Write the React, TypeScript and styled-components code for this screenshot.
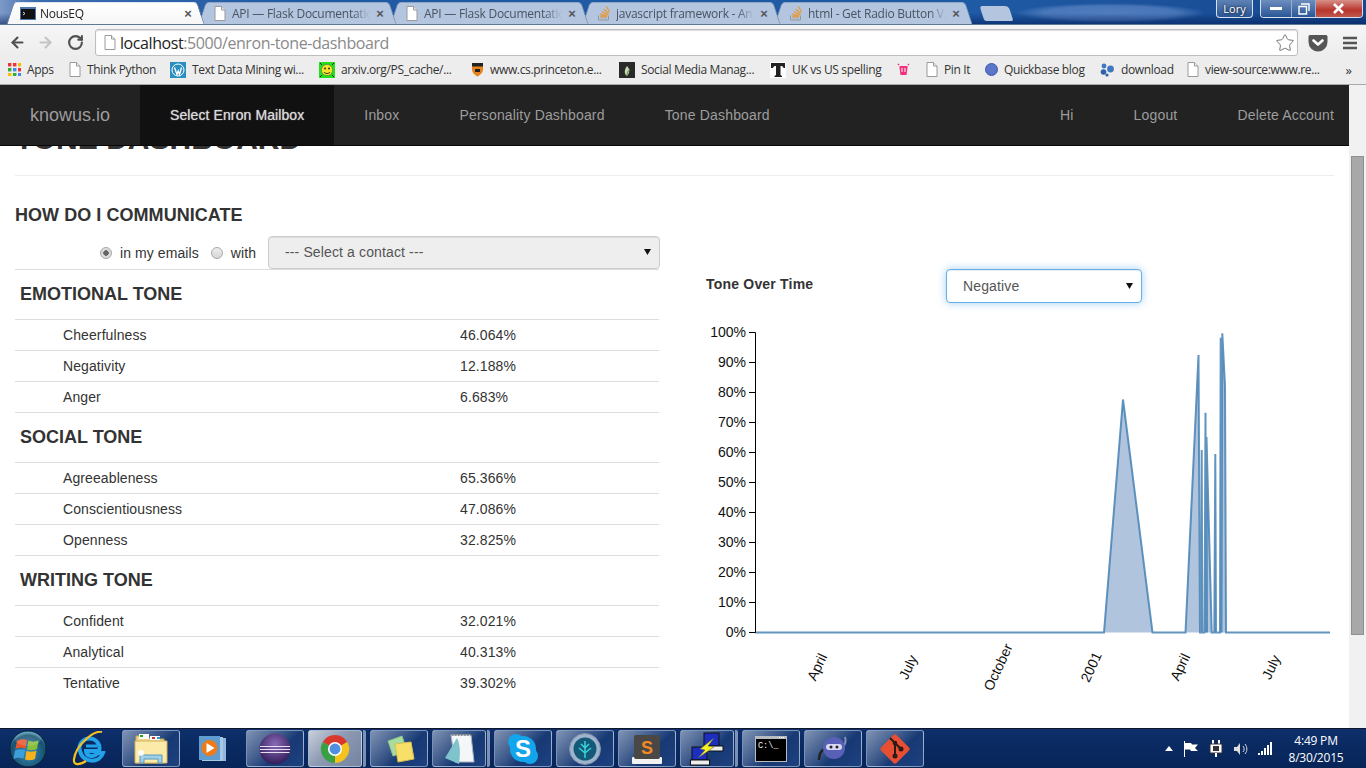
import React from "react";
import styled, { createGlobalStyle } from "styled-components";
import { ArrowLeft, ArrowRight, RotateCw, Star } from "lucide-react";

const Global = createGlobalStyle`
  html, body { margin: 0; padding: 0; height: 100%; overflow: hidden; background: #fff; }
  * { box-sizing: border-box; }
`;

const UI = `"Open Sans", "Noto Sans", "Liberation Sans", sans-serif`;
const WEB = `"Liberation Sans", Arial, sans-serif`;

const Desktop = styled.div`
  width: 1366px; height: 768px; display: flex; flex-direction: column; overflow: hidden;
  font-family: ${WEB}; color: #333;
`;

/* ---------- window title bar with tabs ---------- */
const TitleBar = styled.div`
  height: 25px; flex: none; display: flex; align-items: flex-start; padding-left: 6px;
  border-bottom: 1px solid #5f7898;
  background:
    linear-gradient(rgba(0,20,80,0) 55%, rgba(0,25,85,.55) 100%),
    radial-gradient(ellipse 95px 10px at 1110px 13px, rgba(90,132,196,.85) 0, rgba(90,132,196,.7) 70%, rgba(90,132,196,0) 100%),
    linear-gradient(90deg, #7d9ac6 0, #3c6cb0 35px, #1f5aa4 300px, #1f5aa4 980px, #17488f 1366px);
`;
const Tab = styled.div<{ $active?: boolean; $z: number }>`
  position: relative; width: 199px; height: 22px; margin-top: 2px; margin-right: -7px;
  z-index: ${p => p.$z}; display: flex; align-items: center; padding: 0 11px 0 14px;
  font: 12px ${UI}; color: ${p => (p.$active ? "#222" : "#4a5361")};
  &::before, &::after {
    content: ""; position: absolute; top: 0; bottom: 0; width: 52%; z-index: -1;
    background: ${p => (p.$active ? "linear-gradient(#ffffff, #f6f6f6)" : "#b3c5df")};
    border-top: 1px solid ${p => (p.$active ? "#dfe6f0" : "#8ea6c8")};
  }
  &::before { left: 4px; transform: skewX(-18deg); border-left: 1px solid #7089ab; border-top-left-radius: 4px; }
  &::after { right: 4px; transform: skewX(18deg); border-right: 1px solid #7089ab; border-top-right-radius: 4px; }
`;
const TabIcon = styled.span`width: 16px; flex: none; display: flex; justify-content: center;`;
const TabTitle = styled.span`
  flex: 1; min-width: 0; margin-left: 4px; white-space: nowrap; overflow: hidden; letter-spacing: -0.25px;
  -webkit-mask-image: linear-gradient(90deg, #000 88%, transparent 100%);
  mask-image: linear-gradient(90deg, #000 88%, transparent 100%);
`;
const TabClose = styled.span`
  flex: none; width: 12px; margin-left: 4px; font: bold 13px ${WEB}; color: #555; text-align: center;
`;
const NewTab = styled.div`
  width: 29px; height: 15px; margin: 6px 0 0 16px; background: #b3c5df; border-radius: 3px 4px 2px 2px;
  transform: skewX(18deg); flex: none;
`;
const WindowArea = styled.div`
  margin-left: auto; display: flex; gap: 7px; padding-right: 3px; align-items: flex-start;
`;
const UserBadge = styled.div`
  width: 37px; height: 18px; border: 1px solid #d6e0ee; border-top: 0; border-radius: 0 0 4px 4px;
  background: linear-gradient(#5f82b4, #2a5696); color: #fff; font: 11px ${UI};
  display: flex; align-items: center; justify-content: center;
  text-shadow: 0 0 3px #000;
`;
const Controls = styled.div`
  width: 103px; height: 18px; display: flex; border: 1px solid #d6e0ee; border-top: 0; border-radius: 0 0 4px 4px;
  overflow: hidden;
`;
const Ctrl = styled.div<{ $w: number; $close?: boolean }>`
  width: ${p => p.$w}px; display: flex; align-items: center; justify-content: center;
  color: #fff; background: ${p => (p.$close ? "linear-gradient(#d89088, #b8352c 60%, #c0584e)" : "linear-gradient(#6d8ebe, #2a5696)")};
  border-right: 1px solid #9ab0d0;
  &:last-child { border-right: 0; }
`;

/* ---------- browser toolbar ---------- */
const Toolbar = styled.div`
  height: 31px; flex: none; display: flex; align-items: center; padding: 4px 0 0 8px;
  background: linear-gradient(#f6f6f6, #ededed);
`;
const NavBtn = styled.div<{ $w: number }>`
  width: ${p => p.$w}px; flex: none; display: flex; align-items: center; justify-content: center;
`;
const Omnibox = styled.div`
  width: 1203px; height: 27px; flex: none; background: #fff; border: 1px solid #bdbdbd; border-radius: 3px;
  display: flex; align-items: center; padding: 0 2px 0 8px; font: 16px ${UI}; color: #8a8a8a;
  box-shadow: inset 0 1px 1px #ddd;
`;
const UrlHost = styled.span`color: #222;`;
const Url = styled.span`margin-left: 4px; white-space: nowrap; letter-spacing: -0.42px;`;
const OmniStar = styled.div`margin-left: auto; display: flex;`;

/* ---------- bookmarks ---------- */
const Bookmarks = styled.div`
  height: 29px; flex: none; display: flex; align-items: center; padding: 0 0 1px 8px;
  background: #ededed; border-bottom: 1px solid #a9a9a9; font: 12px ${UI}; color: #333;
  position: relative;
`;
const Bookmark = styled.div<{ $w: number }>`
  width: ${p => p.$w}px; flex: none; display: flex; align-items: center; gap: 6px; white-space: nowrap;
  letter-spacing: -0.35px;
  svg { flex: none; }
`;
const More = styled.div`margin-left: auto; padding-right: 14px; font-size: 13px;`;

/* ---------- page viewport ---------- */
const Viewport = styled.div`flex: 1; min-height: 0; display: flex;`;
const Page = styled.div`flex: 1; min-width: 0; display: flex; flex-direction: column;`;
const Navbar = styled.nav`
  height: 61px; flex: none; display: flex; background: #222; border-bottom: 1px solid #080808;
  color: #9d9d9d; font-size: 14px; position: relative; z-index: 2;
`;
const Brand = styled.div`padding: 0 30px; display: flex; align-items: center; font-size: 18px;`;
const NavItem = styled.div<{ $active?: boolean }>`
  padding: 0 30px; display: flex; align-items: center; white-space: nowrap; letter-spacing: .17px;
  ${p => p.$active && `background: #111; color: #d8d8d8; text-shadow: 0 0 1px #bbb; letter-spacing: .1px;`}
`;
const NavRight = styled.div`margin-left: auto; display: flex; margin-right: -15px;`;
const Scroller = styled.div`flex: 1; min-height: 0; overflow: hidden; background: #fff;`;
const Content = styled.div`margin-top: -24px;`;
const Header = styled.div`margin: 0 15px;`;
const PageTitle = styled.h1`
  margin: 0; font-size: 30px; line-height: 33px; font-weight: 700; white-space: nowrap;
`;
const Rule = styled.hr`margin: 20px 0 0; border: 0; border-top: 1px solid #eee;`;
const Columns = styled.div`display: grid; grid-template-columns: 1fr 1fr; margin-top: 29px;`;
const LeftCol = styled.div`padding: 0 15.5px 0 15px;`;
const RightCol = styled.div`padding: 64px 0 0 15px;`;
const Heading = styled.h4`
  margin: 0 0 11px; font-size: 18px; line-height: 20px; font-weight: 700; text-transform: uppercase;
  letter-spacing: .05px;
`;
const FilterRow = styled.div`
  display: flex; align-items: center; justify-content: flex-end; margin-right: -1px; height: 33px;
  font-size: 14px;
`;
const Radio = styled.span<{ $on?: boolean }>`
  width: 12px; height: 12px; border-radius: 50%; flex: none; border: 1px solid #a8a8a8;
  background: ${p => (p.$on ? "radial-gradient(circle, #666 0 2.5px, #dcdcdc 3px)" : "linear-gradient(#eee, #d6d6d6)")};
`;
const RadioLabel = styled.span`margin: 1px 12px 0 8px; white-space: nowrap; letter-spacing: .08px;`;
const Dropdown = styled.div<{ $focus?: boolean; $w: number }>`
  width: ${p => p.$w}px; height: ${p => (p.$focus ? 34 : 33)}px; flex: none; border-radius: 4px; font-size: 14px; color: #555;
  display: flex; align-items: center; justify-content: space-between; padding: 0 8px ${p => (p.$focus ? 0 : 2)}px 16px;
  letter-spacing: .13px;
  background: ${p => (p.$focus ? "#fff" : "#eee")};
  border: 1px solid ${p => (p.$focus ? "#66afe9" : "#ccc")};
  box-shadow: ${p => (p.$focus ? "inset 0 1px 1px rgba(0,0,0,.075), 0 0 8px rgba(102,175,233,.6)" : "inset 0 1px 1px rgba(0,0,0,.075)")};
`;
const Caret = styled.svg`flex: none; margin-top: -1px;`;
const Section = styled.section`border-top: 1px solid #ddd;`;
const SectionTitle = styled.h4`
  margin: 0; height: 49px; padding-left: 5px; display: flex; align-items: center;
  font-size: 18px; font-weight: 700; text-transform: uppercase;
`;
const Row = styled.div`
  height: 31px; border-top: 1px solid #ddd; display: grid; grid-template-columns: 397px 1fr;
  align-items: center; font-size: 14px; padding-left: 48px; letter-spacing: .1px;
`;
const ToneRow = styled.div`display: flex; align-items: flex-start; padding-left: 16.5px;`;
const ToneTitle = styled.div`
  width: 240px; flex: none; margin-top: 7px; font-size: 14px; font-weight: 700; letter-spacing: .2px;
`;
const Chart = styled.svg`display: block; margin-top: 17px;`;

const Scrollbar = styled.div`
  width: 17px; flex: none; background: #f1f1f1; display: flex; flex-direction: column; align-items: center;
`;
const ScrollSpacer = styled.div<{ $h: number }>`height: ${p => p.$h}px; flex: none;`;
const Thumb = styled.div`width: 13px; height: 479px; flex: none; background: #a8a8a8; border: 1px solid #8f8f8f;`;

/* ---------- windows task bar ---------- */
const Taskbar = styled.div`
  height: 40px; flex: none; display: flex; align-items: stretch; gap: 4px; padding: 1px 20px 1px 0;
  background: linear-gradient(#0f2f6c, #0a2a62 40%, #082558);
  border-top: 1px solid #10172c;
`;
const Pin = styled.div<{ $frame?: boolean; $active?: boolean; $w?: number }>`
  width: ${p => p.$w ?? 58}px; flex: none; display: flex; align-items: center; justify-content: center;
  border-radius: 3px;
  ${p => p.$frame && `
    border: 1px solid rgba(200,215,235,.55);
    background: ${p.$active
      ? "linear-gradient(135deg, #c9d0dc, #8d9ab2 45%, #7583a0)"
      : "linear-gradient(135deg, #7f93b4, #3f5b8c 40%, #173a74 60%, #1d4080)"};
  `}
`;
const PinStack = styled.div`
  width: 3px; margin-left: -3px; flex: none; border-radius: 0 2px 2px 0;
  background: rgba(200,215,235,.6);
`;
const Tray = styled.div`margin-left: auto; display: flex; align-items: center; color: #fff;`;
const TrayItem = styled.div<{ $w?: number }>`
  width: ${p => p.$w ?? 25}px; display: flex; justify-content: center; align-items: center;
`;
const Clock = styled.div`
  width: 60px; margin-left: 8px; text-align: center; font: 12px/17px ${UI}; color: #fff; letter-spacing: -0.2px;
`;

/* ---------- drawings ---------- */
const PageIcon = () => (
  <svg width="12" height="15" viewBox="0 0 12 15">
    <path d="M1 .5h6.5L11 4v10.5H1z" fill="#fff" stroke="#9a9a9a" />
    <path d="M7.5.5V4H11" fill="#eee" stroke="#9a9a9a" />
  </svg>
);
const TermFav = () => (
  <svg width="16" height="13" viewBox="0 0 16 13">
    <rect width="16" height="13" fill="#4a78b0" />
    <rect x="1" y="2" width="14" height="10" fill="#111" />
    <path d="M3 5l2 1.5L3 8" stroke="#ddd" fill="none" />
  </svg>
);
const SOIcon = () => (
  <svg width="14" height="16" viewBox="0 0 14 16">
    <path d="M1.5 10.5v4.5h10v-4.5" fill="none" stroke="#999" />
    <path d="M3 13h7" stroke="#aaa" />
    <path d="M3 11l7 .8M3.5 9l6.8 1.8M5 6.5l6 3.2M7 4.2l4.8 4.6M9.5 1.5l3 5.5" stroke="#e59a3c" strokeWidth="1.3" />
  </svg>
);
const AppsIcon = () => {
  const c = ["#e33", "#e33", "#fb0", "#3a3", "#48e", "#e33", "#fb0", "#3a3", "#48e"];
  return (
    <svg width="13" height="13" viewBox="0 0 13 13">
      {c.map((f, i) => <rect key={i} x={(i % 3) * 5} y={Math.floor(i / 3) * 5} width="3.4" height="3.4" fill={f} />)}
    </svg>
  );
};
const WpIcon = () => (
  <svg width="16" height="16" viewBox="0 0 16 16">
    <rect width="16" height="16" fill="#2a8fc0" />
    <circle cx="8" cy="8" r="6" fill="none" stroke="#fff" />
    <path d="M4.5 5.5l2.5 7 1.2-3.5 1.3 3.5 2-7" fill="none" stroke="#fff" strokeWidth="1.4" />
  </svg>
);
const SmileyIcon = () => (
  <svg width="16" height="16" viewBox="0 0 16 16">
    <rect width="16" height="16" fill="#22e01a" />
    <circle cx="8" cy="8" r="5.6" fill="#f5e62a" stroke="#665" strokeWidth=".6" />
    <circle cx="6" cy="6.5" r=".9" fill="#222" /><circle cx="10" cy="6.5" r=".9" fill="#222" />
    <path d="M5 10c1.5 2 4.5 2 6 0" fill="none" stroke="#222" />
    <path d="M1 1l2 2M15 1l-2 2M1 15l2-2M15 15l-2-2" stroke="#222" />
  </svg>
);
const ShieldIcon = () => (
  <svg width="13" height="15" viewBox="0 0 13 15">
    <path d="M1 1h11v6c0 4-3 6-5.500 7.500C4 13 1 11 1 7z" fill="#e8821e" />
    <path d="M1 1h11v3.500H1z" fill="#222" />
    <path d="M4 7h5v3H4z" fill="#222" />
  </svg>
);
const LeafIcon = () => (
  <svg width="16" height="16" viewBox="0 0 16 16">
    <rect width="16" height="16" fill="#2a2a28" />
    <path d="M8 14c-3-2-3-6 0-10 3 3 3 7 0 10z" fill="#c9d8b8" />
    <path d="M8 14c0-3 1-5 3-7" stroke="#5c8a3c" fill="none" />
  </svg>
);
const TIcon = () => (
  <svg width="16" height="16" viewBox="0 0 16 16">
    <rect width="16" height="16" fill="#fff" />
    <path d="M1 1h14v5h-1.500c-.5-1.500-1-2-3-2v9l1.500 1v1H4.500v-1L6 13V4c-2 0-2.500.5-3 2H1z" fill="#222" />
  </svg>
);
const PinkIcon = () => (
  <svg width="15" height="13" viewBox="0 0 15 13">
    <path d="M2 1l1 1M13 1l-1 1" stroke="#e6307a" strokeWidth="1.5" />
    <path d="M3.500 3h8v2l-1 7h-6l-1-7z" fill="#f0307c" />
    <path d="M6 5v4M9 5v4" stroke="#fff" />
  </svg>
);
const BlueDot = () => (
  <svg width="13" height="13" viewBox="0 0 13 13">
    <circle cx="6.500" cy="6.500" r="6" fill="#5b76c8" stroke="#3f5aa8" />
  </svg>
);
const DropIcon = () => (
  <svg width="15" height="14" viewBox="0 0 15 14">
    <circle cx="4" cy="3" r="2.400" fill="#3f78c0" /><circle cx="10.500" cy="6" r="3.400" fill="#3f78c0" />
    <circle cx="3.500" cy="9" r="2.800" fill="#2e62a8" /><circle cx="7" cy="12" r="1.600" fill="#2e62a8" />
  </svg>
);
const Pocket = () => (
  <svg width="20" height="18" viewBox="0 0 20 18">
    <path d="M2 1h16a1.500 1.500 0 0 1 1.500 1.500V8a9.500 9.500 0 0 1-19 0V2.500A1.500 1.500 0 0 1 2 1z" fill="#555" />
    <path d="M5.500 6.500L10 10.500l4.500-4" fill="none" stroke="#fff" strokeWidth="2.600" strokeLinecap="round" strokeLinejoin="round" />
  </svg>
);
const Hamburger = () => (
  <svg width="14" height="14" viewBox="0 0 14 14">
    <path d="M0 2h14M0 7h14M0 12h14" stroke="#555" strokeWidth="2.600" />
  </svg>
);

const Orb = () => (
  <svg width="38" height="38" viewBox="0 0 38 38">
    <defs>
      <radialGradient id="orb" cx=".5" cy=".6" r=".6">
        <stop offset="0" stopColor="#3a8cbc" /><stop offset=".8" stopColor="#15506f" /><stop offset="1" stopColor="#6abcd8" />
      </radialGradient>
    </defs>
    <circle cx="19" cy="19" r="18" fill="url(#orb)" stroke="#0a2030" />
    <path d="M8 11c3-2 7-2 10-1l-1.500 8.500c-3-1-7-1-10 .5z" fill="#e8552c" />
    <path d="M19.500 10.500c3 1.500 7 1.500 10 0L28 19c-3 1.500-7 1.500-10 .5z" fill="#86bf3a" />
    <path d="M6 20.500c3-1.500 7-1.500 10-.5l-1.500 8.500c-3-1-7-1-10 .5z" fill="#3c9fdc" />
    <path d="M17.500 21c3 1 7 1 10-.5L26 29c-3 1.500-7 1.500-10 .5z" fill="#f6b21c" />
    <ellipse cx="19" cy="9" rx="13" ry="7" fill="#fff" opacity=".14" />
  </svg>
);
const IE = () => (
  <svg width="34" height="36" viewBox="0 0 34 36">
    <path d="M8 20a10 9.500 0 1 1 19 0H14c.5 6 8 6.500 11.500 2H31c-3 10-20 11-23-2z" fill="none" stroke="#22a2e8" strokeWidth="4" />
    <path d="M14 15h11" stroke="#22a2e8" strokeWidth="3" />
    <path d="M30 1C22-1 4 14 2 28c-1 7 6 6 12 2" fill="none" stroke="#f5c020" strokeWidth="2.200" />
  </svg>
);
const FolderIcon = () => (
  <svg width="34" height="32" viewBox="0 0 34 32">
    <path d="M2 3h12l2 3h14v24H2z" fill="#f2d88a" stroke="#c8a850" />
    <rect x="5" y="1" width="10" height="5" fill="#fff" /><rect x="16" y="3" width="10" height="4" fill="#fff" />
    <rect x="6" y="2" width="3" height="2" fill="#2a2" /><rect x="18" y="4" width="3" height="2" fill="#c33" /><rect x="23" y="4" width="3" height="2" fill="#39c" />
    <path d="M1 8h32v22H1z" fill="#fbeaa8" stroke="#d2b260" />
    <path d="M6 30v-8h22v8h-4v-4H10v4z" fill="#9ed0e8" stroke="#5a9ac0" />
    <circle cx="7" cy="20" r="3" fill="#fff" opacity=".85" />
  </svg>
);
const MediaIcon = () => (
  <svg width="28" height="28" viewBox="0 0 28 28">
    <rect x="6" y="3" width="21" height="23" fill="#8fb8dc" />
    <rect x="3" y="2" width="21" height="24" fill="#a8c8e4" />
    <rect x="0" y="1" width="21" height="24" fill="#5f9cd0" />
    <circle cx="10.500" cy="13" r="8" fill="#ef7a18" />
    <path d="M7.500 8l8 5-8 5z" fill="#fff" />
  </svg>
);
const EclipseIcon = () => (
  <svg width="32" height="32" viewBox="0 0 32 32">
    <defs>
      <radialGradient id="ec" cx=".5" cy=".35" r=".7">
        <stop offset="0" stopColor="#8a6ab8" /><stop offset="1" stopColor="#2a1650" />
      </radialGradient>
    </defs>
    <circle cx="16" cy="16" r="15.500" fill="url(#ec)" />
    <path d="M1 13.500h30M.8 16.500h30.400M1.500 19.500h29" stroke="#e8e0f0" strokeWidth="1.200" />
  </svg>
);
const ChromeLogo = () => (
  <svg width="30" height="30" viewBox="0 0 32 32">
    <path d="M16 16L3 8.500A15 15 0 0 1 29 8.500Z" fill="#d9382c" />
    <path d="M16 16L29 8.500A15 15 0 0 1 16 31Z" fill="#f4c31c" />
    <path d="M16 16L16 31A15 15 0 0 1 3 8.500Z" fill="#3aa047" />
    <circle cx="16" cy="16" r="7.500" fill="#fff" />
    <circle cx="16" cy="16" r="5.800" fill="#4f8fe0" />
  </svg>
);
const StickyIcon = () => (
  <svg width="32" height="30" viewBox="0 0 32 30">
    <path d="M5 7l14-5 5 15-14 5z" fill="#a8dca0" stroke="#8ac088" />
    <path d="M12 10l16-2 3 17-16 3z" fill="#f8e068" stroke="#d8c050" />
  </svg>
);
const NotepadIcon = () => (
  <svg width="32" height="34" viewBox="0 0 32 34">
    <path d="M8 3h20l3 27H12z" fill="#f4f6f8" stroke="#a8b4c0" />
    <path d="M2 26L14 6c4 8 3 18 2 26z" fill="#7fc4cc" />
    <path d="M9 3h19" stroke="#888" strokeWidth="2" strokeDasharray="1.500 1.500" />
  </svg>
);
const SkypeIcon = () => (
  <svg width="32" height="32" viewBox="0 0 32 32">
    <circle cx="9" cy="9" r="8" fill="#12a5ec" /><circle cx="23" cy="23" r="8" fill="#12a5ec" />
    <circle cx="16" cy="16" r="13" fill="#12a5ec" />
    <text x="16" y="24" textAnchor="middle" fontFamily={WEB} fontWeight="700" fontSize="24" fill="#fff">S</text>
  </svg>
);
const TreeIcon = () => (
  <svg width="32" height="32" viewBox="0 0 32 32">
    <circle cx="16" cy="16" r="15.500" fill="#9fb4cc" stroke="#7b8fa8" />
    <circle cx="16" cy="16" r="11.500" fill="#125a78" />
    <path d="M16 25V8M16 20l-6-5M16 20l6-5M16 15l-4-4M16 15l4-4" stroke="#3cd4dc" strokeWidth="1.500" fill="none" />
  </svg>
);
const SublimeIcon = () => (
  <svg width="32" height="32" viewBox="0 0 32 32">
    <rect x="1" y="24" width="30" height="7" rx="1" fill="#f2f2f2" />
    <rect x="3" y="2" width="26" height="24" rx="2" fill="#4a4846" />
    <text x="16" y="21" textAnchor="middle" fontFamily={WEB} fontWeight="700" fontSize="18" fill="#f08a24">S</text>
  </svg>
);
const PuttyIcon = () => (
  <svg width="34" height="34" viewBox="0 0 34 34">
    <rect x="14" y="1" width="15" height="13" fill="#1c2ec0" stroke="#111" />
    <rect x="16" y="14" width="17" height="5" fill="#eee" stroke="#111" />
    <rect x="2" y="15" width="15" height="13" fill="#1c2ec0" stroke="#111" />
    <rect x="0.500" y="28" width="19" height="5" fill="#eee" stroke="#111" />
    <path d="M24 6L10 17l5 1-7 8 16-11-6-1z" fill="#f8f020" stroke="#555" strokeWidth=".5" />
  </svg>
);
const CmdIcon = () => (
  <svg width="32" height="26" viewBox="0 0 32 26">
    <rect width="32" height="26" fill="#b8bcc0" />
    <rect x="1" y="3" width="30" height="22" fill="#000" />
    <text x="3" y="12" fontFamily={`"Liberation Mono", monospace`} fontSize="8.500" fill="#eee">{"C:\\_"}</text>
    <path d="M24 1.500h6" stroke="#fff" strokeDasharray="1 1" />
  </svg>
);
const NinjaIcon = () => (
  <svg width="36" height="30" viewBox="0 0 36 30">
    <path d="M30 3c2 6-2 12-8 13" fill="none" stroke="#8a8fc0" strokeWidth="2" />
    <path d="M9 15C6 17 4 20 4 26" fill="none" stroke="#222" strokeWidth="2.500" />
    <circle cx="19" cy="14" r="11" fill="#5860b8" />
    <rect x="11" y="10" width="16" height="6" rx="3" fill="#d8d8f0" />
    <circle cx="16" cy="13" r="1.500" fill="#223" /><circle cx="22" cy="13" r="1.500" fill="#223" />
  </svg>
);
const GitIcon = () => (
  <svg width="34" height="34" viewBox="0 0 34 34">
    <rect x="6" y="6" width="22" height="22" rx="2.500" fill="#e84e31" transform="rotate(45 17 17)" />
    <path d="M12 6l5 5v11M17 11l5.500 5.500" fill="none" stroke="#2a1a18" strokeWidth="2" />
    <circle cx="17" cy="11" r="2.300" fill="#2a1a18" /><circle cx="17" cy="24" r="2.500" fill="#2a1a18" /><circle cx="23" cy="17" r="2.500" fill="#2a1a18" />
  </svg>
);

/* ---------- data ---------- */
const sections = [
  { title: "Emotional Tone", rows: [["Cheerfulness", "46.064%"], ["Negativity", "12.188%"], ["Anger", "6.683%"]] },
  { title: "Social Tone", rows: [["Agreeableness", "65.366%"], ["Conscientiousness", "47.086%"], ["Openness", "32.825%"]] },
  { title: "Writing Tone", rows: [["Confident", "32.021%"], ["Analytical", "40.313%"], ["Tentative", "39.302%"]] },
];
const tabs = [
  { t: "NousEQ", i: <TermFav />, a: true },
  { t: "API — Flask Documentation", i: <PageIcon /> },
  { t: "API — Flask Documentation", i: <PageIcon /> },
  { t: "javascript framework - Angular", i: <SOIcon /> },
  { t: "html - Get Radio Button Value", i: <SOIcon /> },
];
const marks: [number, React.ReactNode, string][] = [
  [61, <AppsIcon />, "Apps"], [101, <PageIcon />, "Think Python"], [149, <WpIcon />, "Text Data Mining wi..."],
  [152, <SmileyIcon />, "arxiv.org/PS_cache/..."], [148, <ShieldIcon />, "www.cs.princeton.e..."],
  [151, <LeafIcon />, "Social Media Manag..."], [126, <TIcon />, "UK vs US spelling"], [30, <PinkIcon />, ""],
  [59, <PageIcon />, "Pin It"], [115, <BlueDot />, "Quickbase blog"], [87, <DropIcon />, "download"],
  [150, <PageIcon />, "view-source:www.re..."],
];
const pins: { i: React.ReactNode; f?: boolean; a?: boolean; stack?: boolean }[] = [
  { i: <IE /> }, { i: <FolderIcon />, f: true }, { i: <MediaIcon /> }, { i: <EclipseIcon />, f: true },
  { i: <ChromeLogo />, f: true, a: true, stack: true }, { i: <StickyIcon />, f: true }, { i: <NotepadIcon />, f: true, stack: true },
  { i: <SkypeIcon />, f: true }, { i: <TreeIcon />, f: true }, { i: <SublimeIcon />, f: true },
  { i: <PuttyIcon />, f: true, stack: true }, { i: <CmdIcon />, f: true }, { i: <NinjaIcon />, f: true }, { i: <GitIcon />, f: true },
];

/* chart coordinates are page px minus the svg origin (690,320) */
const OX = 690, OY = 320;
const pts: [number, number][] = [
  [755, 632.5], [1104, 632.5], [1123, 399.5], [1152.5, 632.5], [1185.5, 632.5], [1198.5, 355], [1200, 632.5],
  [1201.2, 632.5], [1201.7, 450], [1202.3, 632.5], [1204.5, 632.5], [1205.5, 412.7], [1206, 632.5], [1206.3, 437],
  [1207, 632.5], [1206.5, 437], [1211.7, 632.5], [1214.3, 632.5], [1215.3, 454], [1216, 632.5], [1220, 632.5],
  [1220.7, 337.7], [1221.5, 632.5], [1222.3, 333.3], [1225, 386], [1226, 632.5], [1330, 632.5],
];
const area = pts.map(([x, y], i) => `${i ? "L" : "M"}${x - OX} ${y - OY}`).join("");
const ticks = [100, 90, 80, 70, 60, 50, 40, 30, 20, 10, 0];
const xLabels: [string, number][] = [["April", 817], ["July", 908], ["October", 998], ["2001", 1091], ["April", 1180], ["July", 1271]];

export default function App() {
  return (
    <Desktop>
      <Global />
      <TitleBar>
        {tabs.map((tab, i) => (
          <Tab key={i} $active={tab.a} $z={tab.a ? 9 : 8 - i}>
            <TabIcon>{tab.i}</TabIcon>
            <TabTitle>{tab.t}</TabTitle>
            <TabClose>×</TabClose>
          </Tab>
        ))}
        <NewTab />
        <WindowArea>
          <UserBadge>Lory</UserBadge>
          <Controls>
            <Ctrl $w={32}><svg width="12" height="5"><rect y="1" width="12" height="3" fill="#fff" /></svg></Ctrl>
            <Ctrl $w={24}><svg width="12" height="12" viewBox="0 0 12 12"><path d="M3 1h8v7M1 3.500h7.500V11H1z" fill="none" stroke="#fff" strokeWidth="1.400" /></svg></Ctrl>
            <Ctrl $w={47} $close><svg width="13" height="11" viewBox="0 0 13 11"><path d="M2 1l9 9M11 1l-9 9" stroke="#fff" strokeWidth="2.600" /></svg></Ctrl>
          </Controls>
        </WindowArea>
      </TitleBar>

      <Toolbar>
        <NavBtn $w={19}><ArrowLeft size={17} strokeWidth={3} color="#505050" /></NavBtn>
        <NavBtn $w={37}><ArrowRight size={17} strokeWidth={3} color="#c4c4c4" /></NavBtn>
        <NavBtn $w={23}><RotateCw size={17} strokeWidth={3} color="#505050" /></NavBtn>
        <NavBtn $w={8} />
        <Omnibox>
          <PageIcon />
          <Url><UrlHost>localhost</UrlHost>:5000/enron-tone-dashboard</Url>
          <OmniStar><Star size={20} strokeWidth={1.2} color="#777" /></OmniStar>
        </Omnibox>
        <NavBtn $w={40}><Pocket /></NavBtn>
        <NavBtn $w={24}><Hamburger /></NavBtn>
      </Toolbar>

      <Bookmarks>
        {marks.map(([w, icon, label], i) => (
          <Bookmark key={i} $w={w}>{icon}{label && <span>{label}</span>}</Bookmark>
        ))}
        <More>»</More>
      </Bookmarks>

      <Viewport>
        <Page>
          <Navbar>
            <Brand>knowus.io</Brand>
            <NavItem $active>Select Enron Mailbox</NavItem>
            <NavItem>Inbox</NavItem>
            <NavItem>Personality Dashboard</NavItem>
            <NavItem>Tone Dashboard</NavItem>
            <NavRight>
              <NavItem>Hi</NavItem>
              <NavItem>Logout</NavItem>
              <NavItem>Delete Account</NavItem>
            </NavRight>
          </Navbar>
          <Scroller>
            <Content>
              <Header>
                <PageTitle>TONE DASHBOARD</PageTitle>
                <Rule />
              </Header>
              <Columns>
                <LeftCol>
                  <Heading>How do I communicate</Heading>
                  <FilterRow>
                    <Radio $on />
                    <RadioLabel>in my emails</RadioLabel>
                    <Radio />
                    <RadioLabel>with</RadioLabel>
                    <Dropdown $w={392}>
                      <span>--- Select a contact ---</span>
                      <Caret width="7" height="7" viewBox="0 0 7 7"><path d="M0 1h7L3.500 7z" fill="#111" /></Caret>
                    </Dropdown>
                  </FilterRow>
                  {sections.map(s => (
                    <Section key={s.title}>
                      <SectionTitle>{s.title}</SectionTitle>
                      {s.rows.map(([k, v]) => (
                        <Row key={k}><span>{k}</span><span>{v}</span></Row>
                      ))}
                    </Section>
                  ))}
                </LeftCol>
                <RightCol>
                  <ToneRow>
                    <ToneTitle>Tone Over Time</ToneTitle>
                    <Dropdown $w={196} $focus>
                      <span>Negative</span>
                      <Caret width="7" height="7" viewBox="0 0 7 7"><path d="M0 1h7L3.500 7z" fill="#111" /></Caret>
                    </Dropdown>
                  </ToneRow>
                  <Chart width="650" height="390" viewBox="0 0 650 390">
                    <path d={area + "Z"} fill="#b0c4de" />
                    <path d={area} fill="none" stroke="#4682b4" strokeWidth="2" strokeOpacity=".85" />
                    <path d={`M${749 - OX} 12.500H${755.5 - OX}V312.500H${749 - OX}`} fill="none" stroke="#000" />
                    {ticks.map((t, i) => (
                      <g key={t}>
                        <path d={`M${749 - OX} ${12.5 + i * 30}H${755 - OX}`} stroke="#000" />
                        <text x={746 - OX} y={17 + i * 30} textAnchor="end" fontFamily={WEB} fontSize="14" fill="#111">{t}%</text>
                      </g>
                    ))}
                    {xLabels.map(([l, x], i) => (
                      <text key={i} transform={`translate(${x - OX} 347) rotate(-65)`} textAnchor="middle" dy="5" fontFamily={WEB} fontSize="14" fill="#111">{l}</text>
                    ))}
                  </Chart>
                </RightCol>
              </Columns>
            </Content>
          </Scroller>
        </Page>
        <Scrollbar>
          <ScrollSpacer $h={71} />
          <Thumb />
        </Scrollbar>
      </Viewport>

      <Taskbar>
        <Pin $w={56}><Orb /></Pin>
        {pins.map((p, i) => (
          <React.Fragment key={i}>
            <Pin $frame={p.f} $active={p.a} $w={p.stack ? 54 : 58}>{p.i}</Pin>
            {p.stack && <PinStack />}
          </React.Fragment>
        ))}
        <Tray>
          <TrayItem $w={19}><svg width="8" height="5"><path d="M0 5l4-5 4 5z" fill="#fff" /></svg></TrayItem>
          <TrayItem><svg width="16" height="16" viewBox="0 0 16 16"><path d="M1.500 0v16" stroke="#fff" /><path d="M2 2h6l1 1.500h6L12 7l3 3H8L7 8.500H2z" fill="#fff" /></svg></TrayItem>
          <TrayItem><svg width="14" height="17" viewBox="0 0 14 17"><path d="M4 0v4M10 0v4" stroke="#fff" strokeWidth="2" /><path d="M1 4h12v9H1z" fill="#fff" stroke="#333" /><path d="M4 6h6v5H4z" fill="#333" /><path d="M7 13v4" stroke="#fff" strokeWidth="2" /></svg></TrayItem>
          <TrayItem><svg width="16" height="14" viewBox="0 0 16 14"><path d="M1 5h3l3-4v12l-3-4H1z" fill="#ddd" /><path d="M10 4c1.500 2 1.500 4 0 6M12 2c2.500 3 2.500 7 0 10" stroke="#ddd" fill="none" /></svg></TrayItem>
          <TrayItem><svg width="15" height="13" viewBox="0 0 15 13"><path d="M0 11h2v2H0zM3 9h2v4H3zM6 6h2v7H6zM9 3h2v10H9zM12 0h2v13h-2z" fill="#fff" /></svg></TrayItem>
          <Clock>4:49 PM<br />8/30/2015</Clock>
        </Tray>
      </Taskbar>
    </Desktop>
  );
}
